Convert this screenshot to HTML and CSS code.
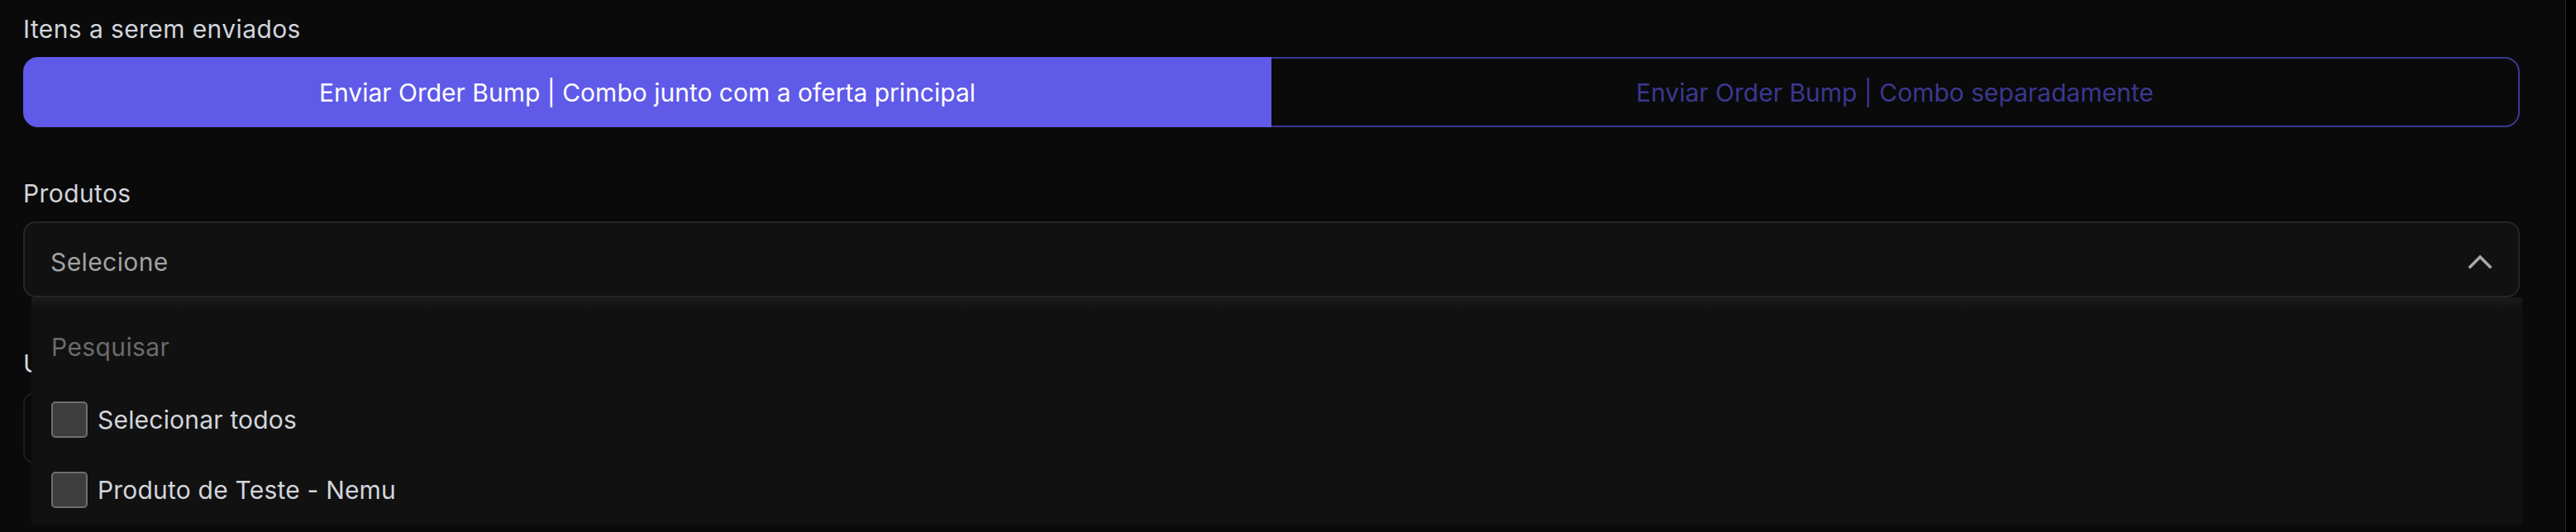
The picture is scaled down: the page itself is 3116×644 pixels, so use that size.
FILE: index.html
```html
<!DOCTYPE html>
<html>
<head lang="pt">
    <meta charset="UTF-8">
    <title>Itens a serem enviados</title>
    <link rel="stylesheet" href="styles.css">
</head>
<body>
<div class="page">
    <main class="form">

        <div class="field">
            <label class="label">Itens a serem enviados</label>
            <div class="toggle">
                <button class="toggleOption active">Enviar Order Bump | Combo junto com a oferta principal</button>
                <button class="toggleOption">Enviar Order Bump | Combo separadamente</button>
            </div>
        </div>

        <div class="field">
            <label class="label">Produtos</label>
            <div class="select open">
                <div class="selectBox">
                    <span class="selectValue">Selecione</span>
                    <svg class="chevron" viewBox="0 0 24 24" width="48" height="48" fill="none" stroke="currentColor" stroke-width="1.8" stroke-linecap="square" stroke-linejoin="miter">
                        <path d="M6 15l6-6 6 6"/>
                    </svg>
                </div>
                <div class="selectMenu">
                    <input class="search" type="text" placeholder="Pesquisar">
                    <ul class="options">
                        <li class="option"><span class="check"></span>Selecionar todos</li>
                        <li class="option"><span class="check"></span>Produto de Teste - Nemu</li>
                    </ul>
                </div>
            </div>
        </div>

        <div class="field">
            <label class="label">Upsell</label>
            <div class="input"></div>
        </div>

    </main>
    <div class="scrollbar"></div>
</div>
</body>
</html>
```

FILE: styles.css
```css
body{
    margin: 0;
    height: 644px;
    overflow: hidden;
    background-color: #0a0a0a;
    font-family: Inter, "Noto Sans", sans-serif;
    font-size: 30px;
    color: #d1d5db;
}
.page{
    display: flex;
    height: 644px;
}
.form{
    flex: 1;
    padding: 15px 55px 0 28px;
}
.scrollbar{
    width: 12px;
    border-left: 1px solid #2a2a2a;
    background-color: #000;
}
.field{
    margin-bottom: 60px;
}
.label{
    display: block;
    line-height: 40px;
    margin-bottom: 14px;
    letter-spacing: 0.4px;
}

/* toggle */
.toggle{
    display: grid;
    grid-template-columns: 1fr 1fr;
    height: 85px;
}
.toggleOption{
    font-family: inherit;
    font-size: 30px;
    letter-spacing: 0;
    background-color: transparent;
    color: #3b3890;
    border: 2px solid #3b3890;
    border-left: 0;
    border-radius: 0 18px 18px 0;
    padding: 0;
}
.toggleOption.active{
    background-color: #5f5ae8;
    border: 2px solid #5f5ae8;
    border-radius: 18px 0 0 18px;
    color: #fff;
}

/* select */
.select{
    position: relative;
}
.selectBox{
    box-sizing: border-box;
    height: 92px;
    display: flex;
    align-items: center;
    justify-content: space-between;
    padding: 0 22px 0 31px;
    background-color: #111;
    border: 2px solid #262626;
    border-radius: 15px;
}
.selectValue{
    color: #a3a3a3;
    letter-spacing: 0.4px;
    margin-top: 6px;
}
.chevron{
    color: #a8a8a8;
    margin-top: 6px;
}
.selectMenu{
    position: absolute;
    top: 100%;
    left: 10px;
    right: -3px;
    height: 275px;
    box-sizing: border-box;
    padding: 40px 0 0 24px;
    overflow: hidden;
    background: linear-gradient(#1b1b1b, #111 15px);
    z-index: 2;
}
.search{
    display: block;
    width: 100%;
    height: 40px;
    margin: 0 0 25px;
    padding: 0;
    border: 0;
    outline: 0;
    background: transparent;
    font-family: inherit;
    font-size: 30px;
    letter-spacing: 0.4px;
    color: #d1d5db;
}
.search::placeholder{
    color: #6b6b6b;
}
.options{
    list-style: none;
    margin: 0;
    padding: 0;
}
.option{
    display: flex;
    align-items: center;
    gap: 12px;
    height: 85px;
    letter-spacing: 0.2px;
}
.check{
    box-sizing: border-box;
    width: 44px;
    height: 44px;
    border: 2px solid #6e6e6e;
    border-radius: 5px;
    background-color: #3d3d3d;
}

/* field hidden under the menu */
.input{
    box-sizing: border-box;
    height: 88px;
    border: 2px solid #1d1d1d;
    border-radius: 15px;
}
```
